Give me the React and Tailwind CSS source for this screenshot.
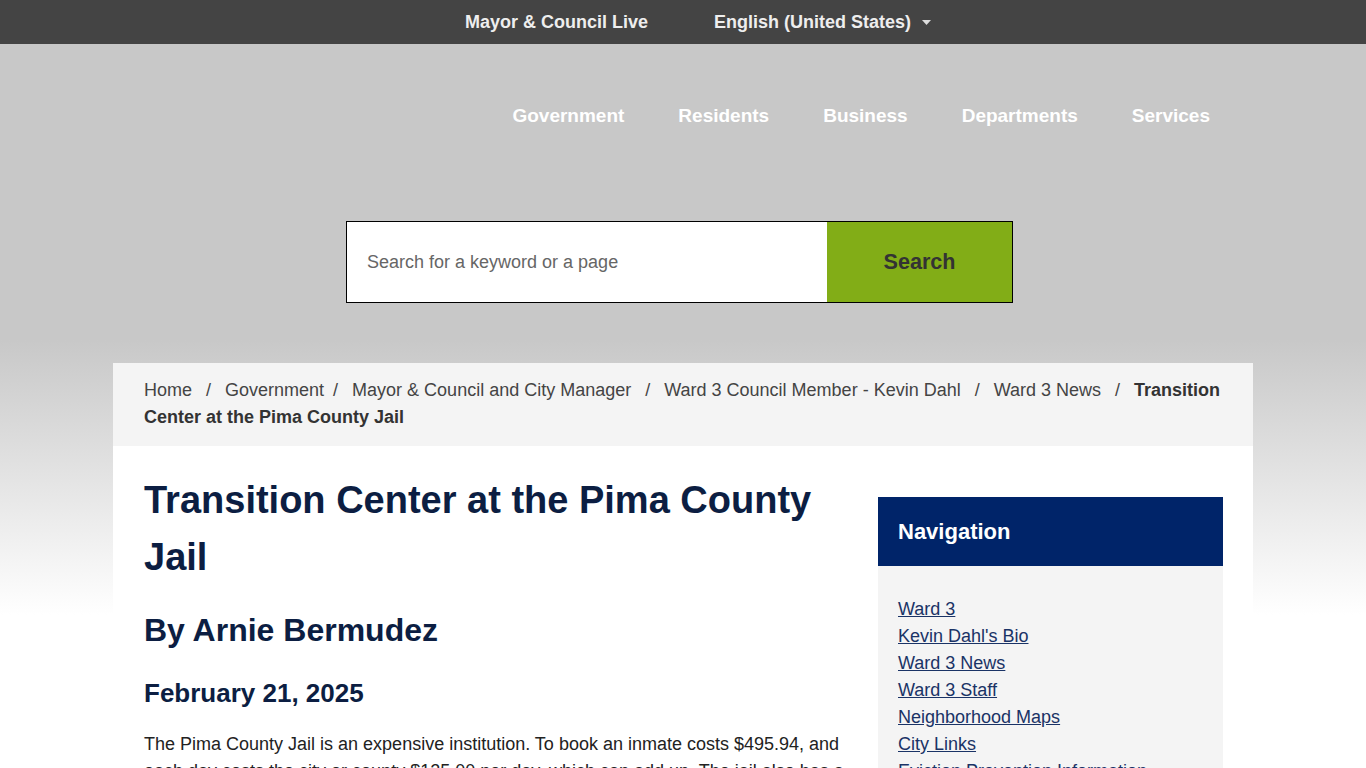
import React from 'react';

const navItems = ['Government', 'Residents', 'Business', 'Departments', 'Services'];

const crumbs = [
    'Home',
    'Government',
    'Mayor & Council and City Manager',
    'Ward 3 Council Member - Kevin Dahl',
    'Ward 3 News',
];

const sideLinks = [
    'Ward 3',
    "Kevin Dahl's Bio",
    'Ward 3 News',
    'Ward 3 Staff',
    'Neighborhood Maps',
    'City Links',
    'Eviction Prevention Information',
    'Ward 3 Newsletters',
    'Contact Ward 3',
];

export default function App() {
    return (
        <div className="min-h-screen bg-[linear-gradient(to_bottom,#c8c8c8_340px,#ffffff_615px)] font-['Liberation_Sans',Arial,sans-serif]">
            {/* top utility bar */}
            <div className="h-[44px] bg-[#444444] flex items-center justify-center gap-[66px] pl-[30px] text-[18px] font-bold text-[#eeeeee]">
                <a href="#">Mayor &amp; Council Live</a>
                <button className="flex items-center gap-[11px] font-bold">
                    English (United States)
                    <svg width="9" height="5" viewBox="0 0 9 5" className="mt-[1px]">
                        <path d="M0 0h9L4.5 5z" fill="#dddddd" />
                    </svg>
                </button>
            </div>

            {/* main nav */}
            <div className="w-[1140px] mx-auto">
                <nav className="flex justify-end gap-[54px] pr-[43px] pt-[61px] text-[19px] leading-[22px] font-bold text-white">
                    {navItems.map((item) => (
                        <a key={item} href="#">{item}</a>
                    ))}
                </nav>
            </div>

            {/* search */}
            <div className="pr-[7px] mt-[94px]">
                <form className="mx-auto w-[667px] h-[82px] flex border border-black bg-white" onSubmit={(e) => e.preventDefault()}>
                    <input
                        type="text"
                        placeholder="Search for a keyword or a page"
                        className="flex-1 min-w-0 pl-[20px] text-[18px] text-[#333] placeholder:text-[#666] outline-none bg-white"
                    />
                    <button className="w-[185px] bg-[#82ad17] text-[21.6px] font-bold text-[#333333]">
                        Search
                    </button>
                </form>
            </div>

            {/* content */}
            <div className="w-[1140px] mx-auto mt-[60px]">
                <div className="bg-[#f4f4f4] pl-[31px] pr-[26px] pt-[14px] pb-[15px] text-[18px] leading-[27px] text-[#444444]">
                    {crumbs.map((c, i) => (
                        <React.Fragment key={c}>
                            <a href="#">{c}</a>
                            <span className={i === 1 ? 'pl-[9px] pr-[14px]' : 'px-[14px]'}>/</span>
                        </React.Fragment>
                    ))}
                    <span className="font-bold text-[#333333]">Transition Center at the Pima County Jail</span>
                </div>

                <div className="bg-white flex gap-[30px] pl-[31px] pr-[30px] pb-[40px]">
                    <main className="w-[704px] pt-[26px]">
                        <h1 className="text-[38px] leading-[57px] font-bold text-[#0c1e42]">
                            Transition Center at the Pima County Jail
                        </h1>
                        <h2 className="mt-[20px] text-[32px] leading-[48px] font-bold text-[#0c1e42]">
                            By Arnie Bermudez
                        </h2>
                        <h3 className="mt-[20px] text-[26px] leading-[39px] font-bold text-[#0c1e42]">
                            February 21, 2025
                        </h3>
                        <p className="mt-[18px] text-[18px] leading-[27px] text-[#222222]">
                            The Pima County Jail is an expensive institution. To book an inmate costs $495.94, and
                            each day costs the city or county $125.00 per day, which can add up. The jail also has
                            a high rate of people returning after release, which is why the new Transition Center
                            matters to everyone in our community.
                        </p>
                    </main>

                    <aside className="w-[345px] mt-[51px] self-start">
                        <div className="h-[69px] bg-[#002469] px-[20px] flex items-center text-[22px] font-bold text-white">
                            Navigation
                        </div>
                        <ul className="bg-[#f4f4f4] px-[20px] pt-[30px] pb-[28px] text-[18px] leading-[27px]">
                            {sideLinks.map((l) => (
                                <li key={l}>
                                    <a href="#" className="underline text-[#1a3366]">{l}</a>
                                </li>
                            ))}
                        </ul>
                    </aside>
                </div>
            </div>
        </div>
    );
}
